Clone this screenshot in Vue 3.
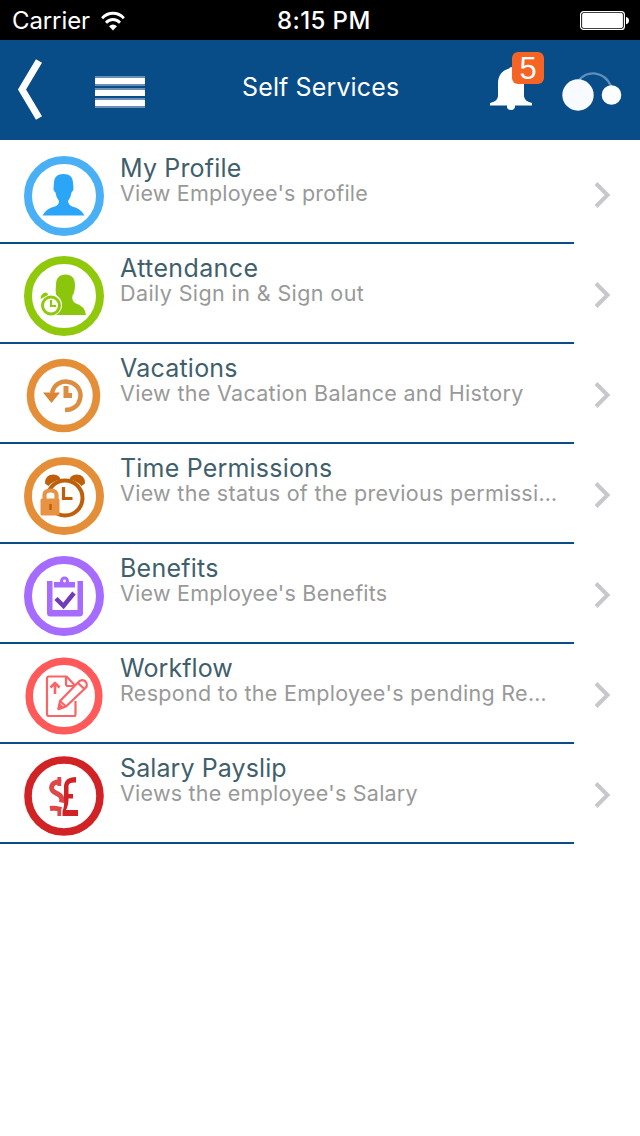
<script setup>
const services = [
  { id: 'profile', title: 'My Profile', detail: "View Employee's profile", ts: 0.17, ds: 0.2 },
  { id: 'attendance', title: 'Attendance', detail: 'Daily Sign in & Sign out', ts: 0.38, ds: 0.4 },
  { id: 'vacations', title: 'Vacations', detail: 'View the Vacation Balance and History', ts: 0.22, ds: 0.31 },
  { id: 'time', title: 'Time Permissions', detail: 'View the status of the previous permissi…', ts: 0.2, ds: 0.3 },
  { id: 'benefits', title: 'Benefits', detail: "View Employee's Benefits", ts: 0.24, ds: 0.23 },
  { id: 'workflow', title: 'Workflow', detail: "Respond to the Employee's pending Re…", ts: 0.09, ds: 0.3 },
  { id: 'salary', title: 'Salary Payslip', detail: "Views the employee's Salary", ts: 0.1, ds: 0.23 },
]
</script>

<template>
  <div class="screen">
    <header class="status">
      <span class="carrier">Carrier</span>
      <svg class="wifi" width="24" height="20" viewBox="0 0 26 20" preserveAspectRatio="none" fill="none" stroke="#fff" stroke-width="3">
        <path d="M1.200 7.200a16.500 16.500 0 0 1 23.600 0" />
        <path d="M5.400 11.700a10.600 10.600 0 0 1 15.200 0" />
        <path d="M13 19.500l-4.300-4.300q4.300-3.600 8.600 0z" fill="#fff" stroke="none" />
      </svg>
      <span class="clock">8:15 PM</span>
      <svg class="battery" width="50" height="20" viewBox="0 0 50 20">
        <rect x=".6" y=".6" width="43.800" height="17.800" rx="3" fill="none" stroke="#fff" stroke-width="1.200" />
        <rect x="2.100" y="2.100" width="40.800" height="14.800" rx="1.600" fill="#fff" />
        <path d="M46 6q3 .6 3 3.600t-3 3.600z" fill="#fff" />
      </svg>
    </header>

    <nav class="bar">
      <svg class="back" width="26" height="64" viewBox="0 0 26 64">
        <path d="M22 3L5 31.500 22 60" fill="none" stroke="#fff" stroke-width="7" />
      </svg>
      <svg class="menu" width="50" height="32" viewBox="0 0 50 32">
        <path d="M0 0h50v10H0zM0 12h50v8H0zM0 22h50v10H0z" fill="#6a90b8" />
        <path d="M0 2h50v6H0zM0 14h50v6H0zM0 24h50v6H0z" fill="#fff" />
      </svg>
      <h1>Self Services</h1>
      <div class="alerts">
        <svg width="44" height="46" viewBox="0 0 44 46" fill="#fff">
          <path d="M19 3.500q2-3 5 0c6.500 2 10 7 10 15v13q1 5 8 6.500v2.500H25q.5 4.500-4 4.500-4.500 0-4-4.500H0v-2.500q7-1.500 8-6.500v-13c0-8 4-13 11-15z" />
        </svg>
        <span class="badge">5</span>
      </div>
      <svg class="circles" width="62" height="42" viewBox="0 0 62 42">
        <path d="M18 10C27 0 43 1 50 16" fill="none" stroke="#5f8fbc" stroke-width="2.400" />
        <circle cx="17" cy="25" r="15.700" fill="#f7faff" />
        <circle cx="50.500" cy="25" r="9.800" fill="#fbfdff" />
      </svg>
    </nav>

    <main>
      <article v-for="s in services" :key="s.id" class="row">
        <div class="cell">
          <svg class="icon" width="80" height="80" viewBox="0 0 80 80">
            <template v-if="s.id === 'profile'">
              <circle cx="40" cy="40" r="36" fill="none" stroke="#4ab0f5" stroke-width="8" />
              <path fill="#2ba5f7" d="M30 27c0-6 3.500-9 9.500-9s9.500 3 9.500 9q.5 3.500.5 6.500-1 2-2 3-.5 5-3.500 8.500.5 4 4 5.500 9 2 12.500 9H18.500Q22 52.500 31 50.500q4-1.500 4-5.500-3-3.500-3.500-8.500-1.500-1-2-3 0-3 .5-6.500z" />
            </template>
            <template v-else-if="s.id === 'attendance'">
              <circle cx="40" cy="40" r="36" fill="none" stroke="#90c90c" stroke-width="8" />
              <path fill="#8cc60c" d="M32 29c0-7 3.500-10.500 9.500-10.500S51 22 51 29q0 7-2.500 10.500-1 5 2.500 7.500 10 3 11 12H30V46q4-2 3-5.500-2-3-1-11.500z" />
              <circle cx="27" cy="49" r="11" fill="#fff" />
              <circle cx="27" cy="49.500" r="8.500" fill="#fff" stroke="#90c90c" stroke-width="3" />
              <path d="M16.500 43q0-5 4.500-6.500 3 0 3 2.500z" fill="#90c90c" />
              <path d="M27 44v6h5" fill="none" stroke="#90c90c" stroke-width="2.200" />
            </template>
            <template v-else-if="s.id === 'vacations'">
              <circle cx="39.500" cy="39.500" r="33" fill="none" stroke="#e48f38" stroke-width="7.600" />
              <path d="M28 37C30 28 38 24 45 26c9 2 13 10 11 17-1.500 6.500-7 11-15 11" fill="none" stroke="#dc8d40" stroke-width="4.500" />
              <path d="M19 36.500h17L27.500 47z" fill="#d98534" />
              <path d="M39.500 30h5v7H48v5h-8.500z" fill="#dc8d40" />
            </template>
            <template v-else-if="s.id === 'time'">
              <ellipse cx="40" cy="40" rx="36" ry="35" fill="none" stroke="#e48f38" stroke-width="8" />
              <path d="M21 27.500q0-9 8.500-9 6 .5 7 5-8 1.500-12 6.500zM61 27.500q0-9-8.500-9-6 .5-7 5 8 1.500 12 6.500z" fill="#bf5f0a" />
              <circle cx="41" cy="42" r="17.500" fill="none" stroke="#bf5f0a" stroke-width="4" />
              <path d="M39.500 31v11.500h9" fill="none" stroke="#bf5f0a" stroke-width="3.200" />
              <path d="M20.500 44v-5q0-4.500 6-4.500t6 4.500v5" fill="#fff" stroke="#e89343" stroke-width="4.200" />
              <rect x="16.500" y="42.500" width="19" height="17" rx="1.500" fill="#e89343" />
              <path d="M26.500 48v6" stroke="#bf5f0a" stroke-width="2.400" />
            </template>
            <template v-else-if="s.id === 'benefits'">
              <circle cx="40" cy="40" r="36" fill="none" stroke="#a66bff" stroke-width="8" />
              <path d="M23 25h5.500v29h25V25H59v32q0 3.500-3.500 3.500h-29Q23 60.500 23 57z" fill="#a66bff" />
              <path d="M30 31.500v-5.500h6q0-5.500 4.500-5.500T45 26h6v5.500z" fill="#a66bff" />
              <circle cx="40.500" cy="25" r="1.400" fill="#fff" />
              <path d="M32 42.500l7.500 7.500L50 37" fill="none" stroke="#7139bd" stroke-width="4.500" />
            </template>
            <template v-else-if="s.id === 'workflow'">
              <circle cx="40" cy="40" r="34.800" fill="none" stroke="#ff595a" stroke-width="7.600" />
              <g fill="none" stroke="#fb6364" stroke-width="2.200" stroke-linejoin="round">
                <path d="M50.500 32V29l-8-8.500H25q-2 0-2 2V58q0 2 2 2h25.500q1 0 1-2V45" />
                <path d="M42 21v7q0 2 2 2h7" />
                <path d="M31 38V27m-4.500 4.500L31 27l4.500 4.500" stroke-width="2.600" />
                <path d="M34.500 53l1.500-8 18-18.500q3-4 7-1.500 3.500 3.500.5 7L42 50.500zM36 45l6 5.500M54 27l7 6.500" fill="#fff" />
                <path d="M34.500 53l1-4.500 3.500 3z" fill="#fb6364" />
              </g>
            </template>
            <template v-else>
              <circle cx="40" cy="40" r="36" fill="none" stroke="#d12325" stroke-width="7.600" />
              <g fill="none" stroke="#df4748" stroke-width="5">
                <path d="M35.300 21v9M35.300 53v7" stroke-width="3.800" />
                <path d="M37.200 26C26 25 25.500 34 31 36.500c5 2.500 8 4 6.500 10M26 52.500q6-1 11.200 1" />
              </g>
              <path d="M38.500 60V55q2-4 1.500-12V31q0-10 12-10v5.500q-7-.5-7.500 3V38H49v4.500h-4.500q0 7-2.500 11.500h12v6z" fill="#d12325" />
            </template>
          </svg>
          <div class="copy">
            <h2 :style="{ letterSpacing: s.ts + 'px' }">{{ s.title }}</h2>
            <p :style="{ letterSpacing: s.ds + 'px' }">{{ s.detail }}</p>
          </div>
        </div>
        <svg class="chevron" width="18" height="28" viewBox="0 0 18 28">
          <path d="M2 2.500L13.500 14 2 25.500" fill="none" stroke="#c7c7cc" stroke-width="4" />
        </svg>
      </article>
    </main>
  </div>
</template>

<style>
body { margin: 0; background: #fff; }
</style>

<style scoped>
.screen { width: 640px; height: 1136px; overflow: hidden; background: #fff; font-family: Inter, "Liberation Sans", sans-serif; }
.status { height: 40px; box-sizing: border-box; background: #000; color: #fff; display: flex; align-items: center; padding: 1px 10px 0 12px; font-size: 24px; line-height: 40px; }
.carrier { width: 88.5px; letter-spacing: -.1px; }
.clock { margin: 0 auto 0 152.5px; font-weight: 500; letter-spacing: .4px; }
.bar { height: 100px; background: #084c88; color: #fff; display: flex; align-items: flex-start; box-sizing: border-box; padding: 0 17px; }
.bar svg { flex: none; }
.back { margin-top: 18px; }
.menu { margin: 36px 0 0 52px; }
.bar h1 { flex: none; margin: 27px 0 0 97px; width: 159px; font-size: 25px; line-height: 40px; font-weight: 400; letter-spacing: .13px; white-space: nowrap; }
.alerts { flex: none; position: relative; width: 54px; height: 58px; margin: 12px 0 0 89px; }
.alerts svg { position: absolute; left: 0; top: 13px; }
.badge { position: absolute; left: 22px; top: 0; width: 32px; height: 32px; border-radius: 6px; background: #f56424; text-align: center; font: 31px/33px "Liberation Sans", Arial, sans-serif; }
.circles { margin: 30px 0 0 17px; }
main { padding-top: 4px; }
.row { display: flex; height: 100px; }
.cell { display: flex; box-sizing: border-box; width: 574px; height: 100px; border-bottom: 2px solid #084c88; padding: 12px 0 0 24px; }
.icon { flex: none; }
.copy { margin: -3px 0 0 16px; white-space: nowrap; }
h2 { margin: 0; font-size: 25px; line-height: 30px; font-weight: 400; color: #3f5f6d; }
p { margin: -3px 0 0; font-size: 21.5px; line-height: 26px; color: #999; }
.chevron { margin: 37px 0 0 20px; }
</style>
